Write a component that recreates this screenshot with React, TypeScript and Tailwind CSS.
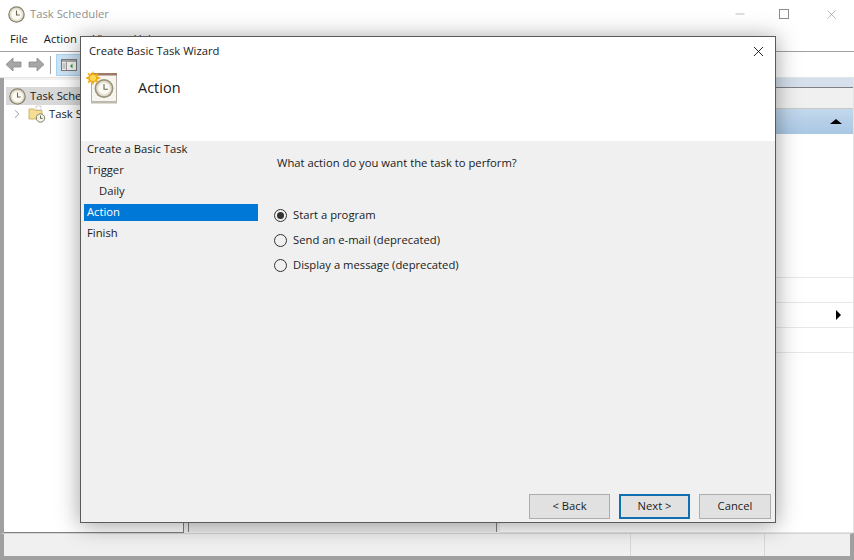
import { X, Minus, ChevronRight } from 'lucide-react';

const font = { fontFamily: '"Open Sans", "Noto Sans", sans-serif' };

function ClockIcon({ size = 17 }: { size?: number }) {
  return (
    <svg width={size} height={size} viewBox="0 0 16 16" className="shrink-0">
      <circle cx="8" cy="8" r="7.8" fill="#87826f" />
      <circle cx="8" cy="8" r="6.6" fill="#e4decb" />
      <circle cx="8" cy="8" r="5" fill="#fbfaf5" />
      <path d="M8 4.2V8.4H11" fill="none" stroke="#6b6552" strokeWidth="1" />
    </svg>
  );
}

function FolderClock() {
  return (
    <svg width="18" height="18" viewBox="0 0 18 18" className="shrink-0">
      <path d="M1 4h5l1.5 1.5H14V14H1z" fill="#f5dd93" stroke="#c9a84f" strokeWidth="0.8" />
      <path d="M8 1h5v4H8z" fill="#fff" stroke="#bbb" strokeWidth="0.6" />
      <circle cx="12.5" cy="13" r="4.2" fill="#f4f1e6" stroke="#6f7a5e" strokeWidth="0.9" />
      <path d="M12.5 10.5V13.4H14.6" fill="none" stroke="#56604a" strokeWidth="0.9" />
    </svg>
  );
}

function WizardIcon() {
  return (
    <svg width="32" height="34" viewBox="0 0 32 34">
      <rect x="5.5" y="3.5" width="25" height="28" fill="#f7f5ef" stroke="#b5ada0" />
      <rect x="5" y="2" width="26" height="2.5" fill="#9c7a66" />
      <rect x="5" y="30" width="26" height="2.5" fill="#bdb9af" />
      <circle cx="18" cy="17.5" r="9.4" fill="#98927e" />
      <circle cx="18" cy="17.5" r="7.8" fill="#e4dfce" />
      <circle cx="18" cy="17.5" r="5.8" fill="#fbfaf6" />
      <path d="M18 13V18.2H22" fill="none" stroke="#6b6552" strokeWidth="1.1" />
      <path d="M7 0l1.6 3.4L12.5 1.6 11 5.2 15 7l-3.9 1.7 1.4 3.7-3.9-1.8L7 14 5.400 10.600 1.500 12.400 2.900 8.700-1 7l4-1.800L1.500 1.600 5.400 3.400z" fill="#f3ab12" />
      <circle cx="7" cy="7" r="3" fill="#fcd95a" />
    </svg>
  );
}

function NavArrow({ flip }: { flip?: boolean }) {
  return (
    <svg width="17" height="15" viewBox="0 0 17 15" className={flip ? '-scale-x-100' : ''}>
      <path d="M1 7.500l7-6.500v4H16v5H8v4z" fill="#a6a6a6" stroke="#8a8a8a" strokeWidth="0.8" />
    </svg>
  );
}

function PaneIcon() {
  return (
    <svg width="16" height="12" viewBox="0 0 16 12">
      <rect x="0.500" y="0.500" width="15" height="11" fill="#f7f7f7" stroke="#7a7a7a" />
      <rect x="1" y="1" width="14" height="2" fill="#a9a9a9" />
      <path d="M5.500 3v8" stroke="#9a9a9a" />
      <path d="M1.500 5h3M1.500 7h3M1.500 9h3" stroke="#9a9a9a" />
      <path d="M9 7l2.500-2.500v5z" fill="#3f9a3f" />
    </svg>
  );
}

function Radio({ label, checked }: { label: string; checked?: boolean }) {
  return (
    <div className="flex h-[25px] items-center gap-[6px]">
      <span className="flex h-[13px] w-[13px] items-center justify-center rounded-full border border-[#333333] bg-[#f0f0f0]">
        {checked && <span className="h-[7px] w-[7px] rounded-full bg-[#333333]" />}
      </span>
      <span>{label}</span>
    </div>
  );
}

function WizButton({ label, active, w }: { label: string; active?: boolean; w: string }) {
  return (
    <button
      className={`flex h-[25px] items-center justify-center bg-[#e1e1e1] text-[11.25px] text-[#222222] ${w} ${
        active ? 'border-2 border-[#0f6fb0]' : 'border border-[#adadad]'
      }`}
    >
      {label}
    </button>
  );
}

export default function App() {
  return (
    <div
      className="relative flex h-[560px] w-[854px] flex-col overflow-hidden bg-white text-[11.25px] text-[#1a1a1a]"
      style={font}
    >
      {/* main window behind the wizard */}
      <div className="flex h-[28px] shrink-0 items-center pl-[8px] text-[#8f8f8f]">
        <ClockIcon />
        <span className="ml-[5px]">Task Scheduler</span>
        <div className="ml-auto flex items-center text-[#8c8c8c]">
          <Minus size={14} strokeWidth={1} className="mr-[32px]" />
          <span className="mr-[35px] h-[10px] w-[10px] border border-[#8c8c8c]" />
          <X size={15} strokeWidth={1} className="mr-[15px]" />
        </div>
      </div>
      <div className="flex h-[24px] shrink-0 items-center gap-[16px] border-b border-[#a0a0a0] pl-[10px]">
        <span>File</span>
        <span>Action</span>
        <span>View</span>
        <span>Help</span>
      </div>
      <div className="flex h-[26px] shrink-0 items-center border-b border-[#e4e4e4] pl-[5px]">
        <NavArrow />
        <span className="ml-[6px] flex">
          <NavArrow flip />
        </span>
        <span className="ml-[5px] h-[18px] w-px bg-[#a0a0a0]" />
        <span className="ml-[5px] flex h-[22px] w-[26px] items-center justify-center border border-[#a9d3f0] bg-[#cce4f7]">
          <PaneIcon />
        </span>
      </div>

      <div className="flex min-h-0 flex-1 border-l-[4px] border-r border-[#a0a0a0] border-r-[#e4e4e4] bg-[#f2f2f2]">
        {/* tree */}
        <div className="mt-[2px] w-[180px] shrink-0 border-r border-b border-[#808080] bg-white pt-[7px] pl-[2px]">
          <div className="flex h-[18px] items-center bg-[#d9d9d9] pl-[3px]">
            <ClockIcon />
            <span className="ml-[4px]">Task Scheduler</span>
          </div>
          <div className="flex h-[18px] items-center pl-[4px]">
            <ChevronRight size={14} strokeWidth={1.2} className="text-[#707070]" />
            <span className="ml-[4px] flex">
              <FolderClock />
            </span>
            <span className="ml-[3px]">Task Scheduler Library</span>
          </div>
        </div>
        {/* middle */}
        <div className="mb-px ml-[4px] w-[309px] shrink-0 border-x border-[#808080] bg-[#f0f0f0]" />
        {/* actions */}
        <div className="ml-[3px] flex flex-1 flex-col border-b border-[#e4e4e4] bg-white">
          <div className="h-[9px] bg-[#d5e0ec]" />
          <div className="h-[21px] border-t border-[#808080] bg-[#f0f0f0]" />
          <div className="flex h-[26px] items-center justify-end border-t border-[#c8c8c8] bg-gradient-to-b from-[#c3d8ec] to-[#a9c7e4] pr-[11px]">
            <span className="border-x-[6px] border-b-[5px] border-x-transparent border-b-black" />
          </div>
          <div className="h-[144px] border-b border-[#e8e8e8]" />
          <div className="h-[25px] border-b border-[#e8e8e8]" />
          <div className="flex h-[25px] items-center justify-end border-b border-[#e8e8e8] pr-[12px]">
            <span className="border-y-[5px] border-l-[5px] border-y-transparent border-l-black" />
          </div>
          <div className="h-[25px] border-b border-[#e8e8e8]" />
        </div>
      </div>

      <div className="flex h-[23px] shrink-0 border-x-[4px] border-t border-[#a0a0a0] border-t-[#d4d4d4] bg-[#f0f0f0]">
        <div className="w-[627px] border-r border-[#d8d8d8]" />
        <div className="w-[134px] border-r border-[#d8d8d8]" />
      </div>
      <div className="h-[4px] shrink-0 bg-[#a0a0a0]" />

      {/* wizard dialog */}
      <div className="absolute top-[36px] left-[80px] flex h-[487px] w-[696px] flex-col border border-[#5a5a5a] bg-[#f0f0f0] shadow-[0_2px_22px_rgba(0,0,0,0.38)]">
        <div className="h-[104px] shrink-0 bg-white">
          <div className="flex h-[28px] items-center justify-between pr-[8px] pl-[8px]">
            <span>Create Basic Task Wizard</span>
            <X size={17} strokeWidth={1.2} className="text-black" />
          </div>
          <div className="flex items-center pt-[6px] pl-[5px]">
            <WizardIcon />
            <span className="ml-[20px] text-[14.5px]">Action</span>
          </div>
        </div>

        <div className="flex min-h-0 flex-1">
          <div className="-mt-[2px] w-[177px] shrink-0 pl-[3px]">
            <div className="flex h-[21px] items-center pl-[3px]">Create a Basic Task</div>
            <div className="flex h-[21px] items-center pl-[3px]">Trigger</div>
            <div className="flex h-[21px] items-center pl-[15px]">Daily</div>
            <div className="flex h-[21px] items-center">
              <div className="flex h-[17px] w-full items-center bg-[#0078d7] pl-[3px] text-white">Action</div>
            </div>
            <div className="flex h-[21px] items-center pl-[3px]">Finish</div>
          </div>

          <div className="flex flex-1 flex-col pl-[16px]">
            <div className="mt-[14px] pl-[3px]">What action do you want the task to perform?</div>
            <div className="mt-[31px]">
              <Radio label="Start a program" checked />
              <Radio label="Send an e-mail (deprecated)" />
              <Radio label="Display a message (deprecated)" />
            </div>
            <div className="mt-auto mb-[3px] flex justify-end gap-[9px] pr-[4px]">
              <WizButton label="< Back" w="w-[81px]" />
              <WizButton label="Next >" active w="w-[71px]" />
              <WizButton label="Cancel" w="w-[72px]" />
            </div>
          </div>
        </div>
      </div>
    </div>
  );
}
